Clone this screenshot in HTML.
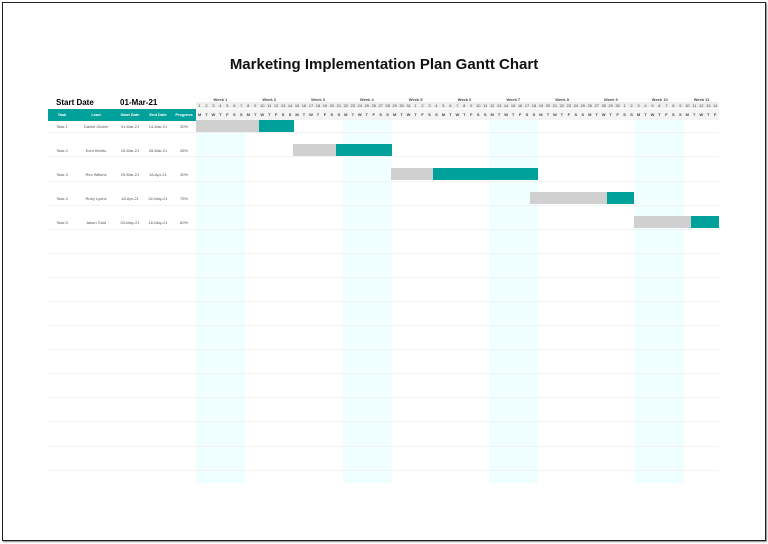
<!DOCTYPE html>
<html><head><meta charset="utf-8"><style>
body{margin:0;width:768px;height:544px;background:#fff;font-family:"Liberation Sans",sans-serif;position:relative;overflow:hidden}
.frame{position:absolute;left:2px;top:2px;width:762px;height:537px;border:1.5px solid #222;box-shadow:1px 1px 1px #888}
.a{position:absolute}
.title{left:0;width:768px;top:56px;text-align:center;font-weight:bold;font-size:15px;color:#111}
.row{position:absolute;display:flex;left:196px;width:523px}
.row span{flex:1;text-align:center;font-size:4px;color:#444;line-height:7px}
.shade{background:#effefe;top:120px;height:363px}
.line{left:48px;width:671px;height:1px;background:#f2f2f2}
.g{background:#d0d0d0;height:12px}
.t{background:#00a19b;height:12px}
.cell{font-size:4px;color:#555;text-align:center}
</style></head><body>
<div class="frame"></div>
<div class="a title">Marketing Implementation Plan Gantt Chart</div>
<div class="a" style="left:56px;top:98px;font-size:8px;font-weight:bold">Start Date</div>
<div class="a" style="left:120px;top:98px;font-size:8px;font-weight:bold">01-Mar-21</div>
<div class="a shade" style="left:196px;width:49px"></div>
<div class="a shade" style="left:343px;width:49px"></div>
<div class="a shade" style="left:489px;width:49px"></div>
<div class="a shade" style="left:635px;width:49px"></div>
<div class="a" style="left:196px;top:102px;width:523px;height:6px;background:#eee"></div>
<div class="a" style="left:196px;top:109px;width:523px;height:11px;background:#f4f4f4"></div>
<div class="row" style="top:96px;font-weight:bold"><span style="flex:7">Week 1</span><span style="flex:7">Week 2</span><span style="flex:7">Week 3</span><span style="flex:7">Week 4</span><span style="flex:7">Week 5</span><span style="flex:7">Week 6</span><span style="flex:7">Week 7</span><span style="flex:7">Week 8</span><span style="flex:7">Week 9</span><span style="flex:7">Week 10</span><span style="flex:5">Week 11</span></div>
<div class="row" style="top:102px"><span>1</span><span>2</span><span>3</span><span>4</span><span>5</span><span>6</span><span>7</span><span>8</span><span>9</span><span>10</span><span>11</span><span>12</span><span>13</span><span>14</span><span>15</span><span>16</span><span>17</span><span>18</span><span>19</span><span>20</span><span>21</span><span>22</span><span>23</span><span>24</span><span>25</span><span>26</span><span>27</span><span>28</span><span>29</span><span>30</span><span>31</span><span>1</span><span>2</span><span>3</span><span>4</span><span>5</span><span>6</span><span>7</span><span>8</span><span>9</span><span>10</span><span>11</span><span>12</span><span>13</span><span>14</span><span>15</span><span>16</span><span>17</span><span>18</span><span>19</span><span>20</span><span>21</span><span>22</span><span>23</span><span>24</span><span>25</span><span>26</span><span>27</span><span>28</span><span>29</span><span>30</span><span>1</span><span>2</span><span>3</span><span>4</span><span>5</span><span>6</span><span>7</span><span>8</span><span>9</span><span>10</span><span>11</span><span>12</span><span>13</span><span>14</span></div>
<div class="row" style="top:111px;font-weight:bold"><span>M</span><span>T</span><span>W</span><span>T</span><span>F</span><span>S</span><span>S</span><span>M</span><span>T</span><span>W</span><span>T</span><span>F</span><span>S</span><span>S</span><span>M</span><span>T</span><span>W</span><span>T</span><span>F</span><span>S</span><span>S</span><span>M</span><span>T</span><span>W</span><span>T</span><span>F</span><span>S</span><span>S</span><span>M</span><span>T</span><span>W</span><span>T</span><span>F</span><span>S</span><span>S</span><span>M</span><span>T</span><span>W</span><span>T</span><span>F</span><span>S</span><span>S</span><span>M</span><span>T</span><span>W</span><span>T</span><span>F</span><span>S</span><span>S</span><span>M</span><span>T</span><span>W</span><span>T</span><span>F</span><span>S</span><span>S</span><span>M</span><span>T</span><span>W</span><span>T</span><span>F</span><span>S</span><span>S</span><span>M</span><span>T</span><span>W</span><span>T</span><span>F</span><span>S</span><span>S</span><span>M</span><span>T</span><span>W</span><span>T</span><span>F</span></div>
<div class="a" style="left:48px;top:109px;width:148px;height:12px;background:#00a19b"></div>
<div class="a" style="left:48px;top:112px;width:148px;display:flex;color:#fff;font-size:4px;font-weight:bold;text-align:center"><span style="width:28px">Task</span><span style="width:40px">Lead</span><span style="width:28px">Start Date</span><span style="width:28px">End Date</span><span style="width:24px">Progress</span></div>
<div class="a line" style="top:132px"></div><div class="a line" style="top:156px"></div><div class="a line" style="top:181px"></div><div class="a line" style="top:205px"></div><div class="a line" style="top:229px"></div><div class="a line" style="top:253px"></div><div class="a line" style="top:277px"></div><div class="a line" style="top:301px"></div><div class="a line" style="top:325px"></div><div class="a line" style="top:349px"></div><div class="a line" style="top:373px"></div><div class="a line" style="top:397px"></div><div class="a line" style="top:421px"></div><div class="a line" style="top:446px"></div><div class="a line" style="top:470px"></div>
<div class="a" style="left:48px;top:124px;width:148px;display:flex" ><span class="cell" style="width:28px">Task 1</span><span class="cell" style="width:40px">Daniel Globin</span><span class="cell" style="width:28px">01-Mar-21</span><span class="cell" style="width:28px">14-Mar-21</span><span class="cell" style="width:24px">30%</span></div>
<div class="a" style="left:48px;top:148px;width:148px;display:flex" ><span class="cell" style="width:28px">Task 2</span><span class="cell" style="width:40px">Kent Benito</span><span class="cell" style="width:28px">15-Mar-21</span><span class="cell" style="width:28px">28-Mar-21</span><span class="cell" style="width:24px">45%</span></div>
<div class="a" style="left:48px;top:172px;width:148px;display:flex" ><span class="cell" style="width:28px">Task 3</span><span class="cell" style="width:40px">Rex Wilkins</span><span class="cell" style="width:28px">29-Mar-21</span><span class="cell" style="width:28px">18-Apr-21</span><span class="cell" style="width:24px">30%</span></div>
<div class="a" style="left:48px;top:196px;width:148px;display:flex" ><span class="cell" style="width:28px">Task 4</span><span class="cell" style="width:40px">Ruby Lyons</span><span class="cell" style="width:28px">18-Apr-21</span><span class="cell" style="width:28px">02-May-21</span><span class="cell" style="width:24px">75%</span></div>
<div class="a" style="left:48px;top:220px;width:148px;display:flex" ><span class="cell" style="width:28px">Task 5</span><span class="cell" style="width:40px">Jason Gold</span><span class="cell" style="width:28px">03-May-21</span><span class="cell" style="width:28px">16-May-21</span><span class="cell" style="width:24px">60%</span></div>
<div class="a g" style="left:196px;top:120px;width:63px"></div><div class="a t" style="left:259px;top:120px;width:35px"></div>
<div class="a g" style="left:293px;top:144px;width:43px"></div><div class="a t" style="left:336px;top:144px;width:56px"></div>
<div class="a g" style="left:391px;top:168px;width:42px"></div><div class="a t" style="left:433px;top:168px;width:105px"></div>
<div class="a g" style="left:530px;top:192px;width:77px"></div><div class="a t" style="left:607px;top:192px;width:27px"></div>
<div class="a g" style="left:634px;top:216px;width:57px"></div><div class="a t" style="left:691px;top:216px;width:28px"></div>
</body></html>
